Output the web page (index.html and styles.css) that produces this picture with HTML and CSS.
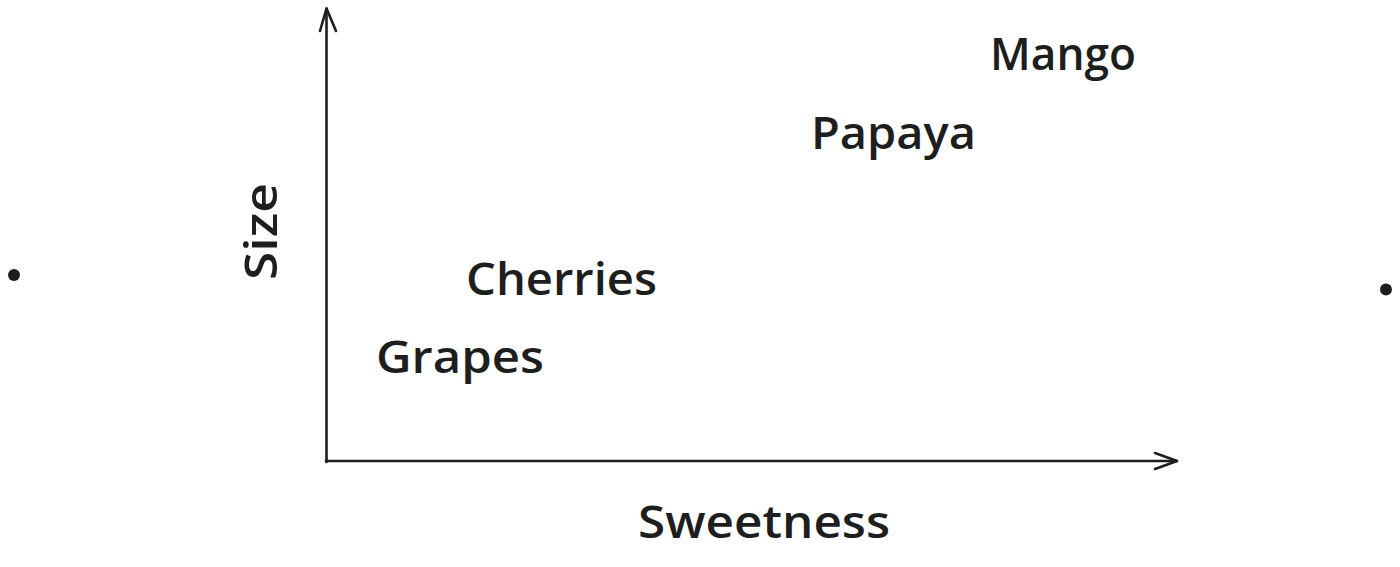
FILE: index.html
```html
<!DOCTYPE html>
<html lang="en">
<head>
<meta charset="utf-8">
<title>Sweetness vs Size</title>
<link rel="stylesheet" href="styles.css">
</head>
<body>
<main class="canvas">
  <svg class="scene" width="1400" height="567" viewBox="0 0 1400 567" xmlns="http://www.w3.org/2000/svg">
    <circle class="dot" cx="14" cy="275" r="6"/>
    <circle class="dot" cx="1386" cy="289.5" r="6"/>
    <g class="axis">
      <path d="M326.5 462 L326.5 8.5"/>
      <path d="M320 31 L326.5 8.5 L336 31"/>
      <path d="M326 461 L1177 461"/>
      <path d="M1155 453 L1177 461 L1155 469"/>
    </g>
    <text class="label" x="990" y="70" textLength="146" lengthAdjust="spacingAndGlyphs">Mango</text>
    <text class="label" x="811" y="149" textLength="165" lengthAdjust="spacingAndGlyphs">Papaya</text>
    <text class="label" x="466" y="295" textLength="191" lengthAdjust="spacingAndGlyphs">Cherries</text>
    <text class="label" x="376" y="373" textLength="168" lengthAdjust="spacingAndGlyphs">Grapes</text>
    <text class="label" x="638" y="538" textLength="252" lengthAdjust="spacingAndGlyphs">Sweetness</text>
    <text class="label" transform="translate(277 280) rotate(-90)" x="0" y="0" textLength="97" lengthAdjust="spacingAndGlyphs">Size</text>
  </svg>
</main>
</body>
</html>
```
FILE: styles.css
```css
html, body {
  margin: 0;
  padding: 0;
  background: #ffffff;
}
.canvas {
  width: 1400px;
  height: 567px;
  overflow: hidden;
}
.scene {
  display: block;
}
.dot {
  fill: #1e1e1e;
}
.axis path {
  fill: none;
  stroke: #1e1e1e;
  stroke-width: 2.6;
  stroke-linecap: round;
  stroke-linejoin: round;
}
.label {
  font-family: "Open Sans", "Noto Sans", sans-serif;
  font-size: 45px;
  font-weight: 600;
  fill: #1e1e1e;
}
```
